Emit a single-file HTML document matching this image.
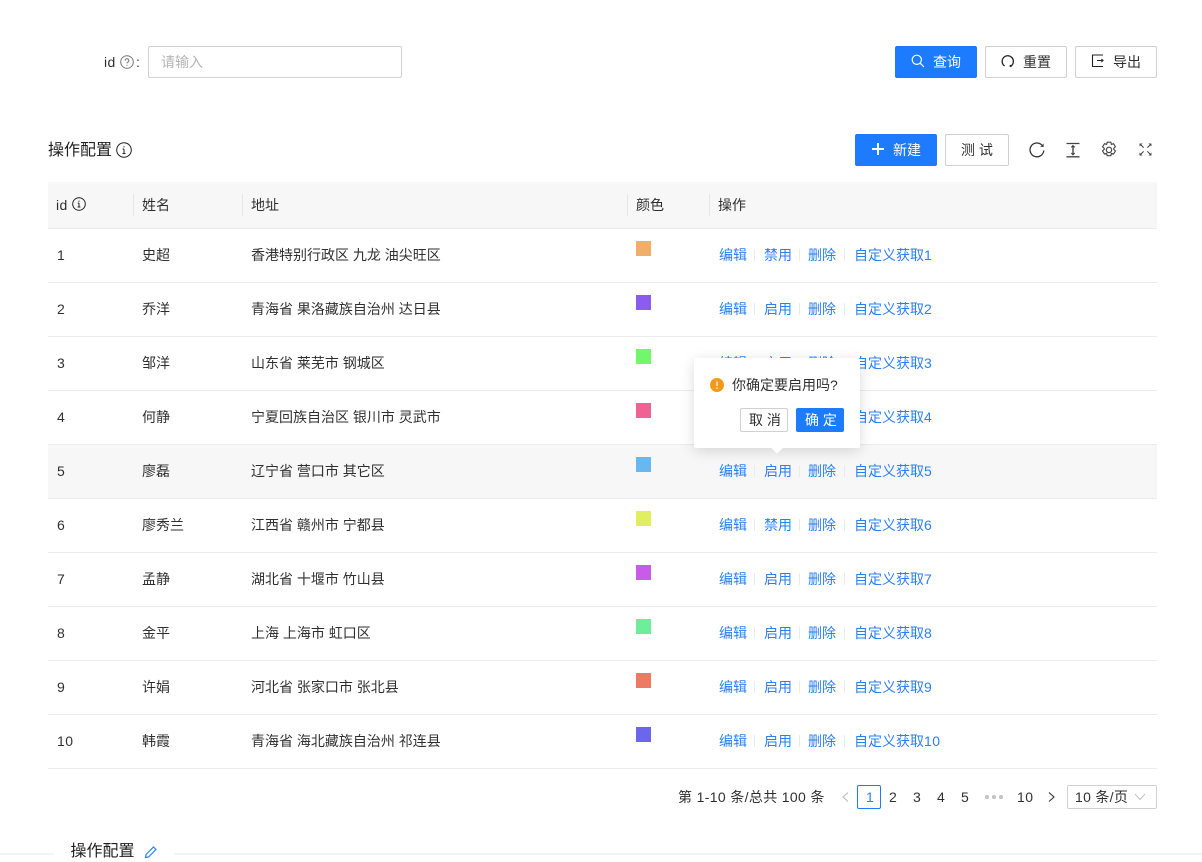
<!DOCTYPE html>
<html><head><meta charset="utf-8">
<style>
html,body{margin:0;padding:0;background:#fff}
body{width:1202px;height:857px;position:relative;overflow:hidden;font-family:"Liberation Sans","Noto Sans CJK SC",sans-serif;font-size:14px;color:rgba(0,0,0,.82)}
.a{position:absolute;white-space:nowrap;line-height:20px}
.box{position:absolute;box-sizing:border-box;border:1px solid #d0d0d0;border-radius:2px;background:#fff}
.pri{position:absolute;box-sizing:border-box;background:#1c7bff;border-radius:2px}
.line{position:absolute;left:48px;width:1109px;height:1px;background:#ececec}
.sw{position:absolute;left:636px;width:15px;height:15px}
.sep{position:absolute;width:1px;height:12px;background:#ebebeb}
.hs{position:absolute;width:1px;height:22px;top:194px;background:#e6e6e6}
.l{color:#2b7ff5}
svg{position:absolute;overflow:visible}
</style></head><body>

<div class="a" style="left:104px;top:52px;letter-spacing:.4px">id</div>
<svg style="left:120px;top:55px" width="14" height="14" viewBox="0 0 14 14" fill="none" stroke="#777"><circle cx="7" cy="7" r="6.3"/><path d="M5.2 5.6a1.8 1.8 0 1 1 2.7 1.5c-.6.4-.9.7-.9 1.3" /><path d="M7 9.8v1"/></svg>
<div class="a" style="left:136px;top:52px">:</div>
<div class="box" style="left:148px;top:46px;width:254px;height:32px"></div>
<div class="a" style="left:161px;top:52px;color:#b5b5b5">请输入</div>

<div class="pri" style="left:895px;top:46px;width:82px;height:32px"></div>
<svg style="left:911px;top:54px" width="14" height="14" viewBox="0 0 14 14" fill="none" stroke="#fff" stroke-width="1.2"><circle cx="5.8" cy="5.8" r="4.6"/><path d="M9.2 9.2l3.8 3.8"/></svg>
<div class="a" style="left:933px;top:52px;color:#fff">查询</div>
<div class="box" style="left:985px;top:46px;width:82px;height:32px"></div>
<svg style="left:1001px;top:54px" width="14" height="14" viewBox="0 0 14 14" fill="none" stroke="#222" stroke-width="1.3"><path d="M3.6 12A5.6 5.6 0 1 1 10.2 11.800"/><circle cx="9.600" cy="12" r="1.100" fill="#222" stroke="none"/></svg>
<div class="a" style="left:1023px;top:52px">重置</div>
<div class="box" style="left:1075px;top:46px;width:82px;height:32px"></div>
<svg style="left:1091px;top:54px" width="14" height="14" viewBox="0 0 14 14" fill="none" stroke="#222" stroke-width="1.1"><path d="M12 1H1.500v11.500H12"/><path d="M6 6.500h6M10.400 5l1.600 1.500-1.600 1.500"/></svg>
<div class="a" style="left:1113px;top:52px">导出</div>

<div class="a" style="left:48px;top:141px;font-size:16px;color:rgba(0,0,0,.88)">操作配置</div>
<svg style="left:116px;top:142px" width="16" height="16" viewBox="0 0 16 16" fill="none" stroke="#222" stroke-width="1"><circle cx="8" cy="8" r="7.300"/><path d="M8 7v4.500M6.600 7H8M6.500 11.500h3M8 4.200v1.200"/></svg>

<div class="pri" style="left:855px;top:134px;width:82px;height:32px"></div>
<svg style="left:872px;top:143px" width="12" height="12" viewBox="0 0 12 12" stroke="#fff" stroke-width="2"><path d="M6 0v12M0 6h12"/></svg>
<div class="a" style="left:893px;top:140px;color:#fff">新建</div>
<div class="box" style="left:945px;top:134px;width:64px;height:32px"></div>
<div class="a" style="left:961px;top:140px">测 试</div>

<svg style="left:1029px;top:142px" width="16" height="16" viewBox="0 0 16 16" fill="none" stroke="#333" stroke-width="1.300"><path d="M14.800 8.500A6.900 6.900 0 1 1 12.800 3"/><path d="M14.600 1.500v3.400h-3.400z" fill="#333" stroke="none"/></svg>
<svg style="left:1065px;top:142px" width="16" height="16" viewBox="0 0 16 16" fill="none" stroke="#444" stroke-width="1.300"><path d="M1.500 1.500h13M1.500 14.800h13"/><path d="M8 4v8.500" stroke-width="1.400"/><path d="M6.300 5.400L8 3.600l1.700 1.800M6.300 11L8 12.800l1.700-1.800" stroke-width="1.100"/></svg>
<svg style="left:1100px;top:141px" width="18" height="18" viewBox="0 0 16 16" fill="none" stroke="#444" stroke-width="1"><path d="M6.400 1h3.200l.5 2 1.900-.6 1.700 2.700-1.500 1.500a5 5 0 0 1 0 .8l1.500 1.500-1.700 2.700-1.900-.6-.5 2H6.400l-.5-2-1.900.6-1.700-2.700 1.500-1.500a5 5 0 0 1 0-.8L2.300 5.100 4 2.400l1.900.6z"/><circle cx="8" cy="7.900" r="2.400"/></svg>
<svg style="left:1139px;top:143px" width="13" height="13" viewBox="0 0 14 14" fill="none" stroke="#444" stroke-width="1.100"><path d="M2 2l3 3M12 2L9 5M2 12l3-3M12 12L9 9"/><path d="M.6.6h3.200L.6 3.800zM13.400.6h-3.200l3.200 3.200zM.6 13.400h3.200L.6 10.200zM13.400 13.400h-3.200l3.200-3.200z" fill="#444" stroke="none"/></svg>

<div style="position:absolute;left:48px;top:182px;width:1109px;height:46px;background:#f7f7f7"></div>
<div class="line" style="top:228px"></div>
<div style="position:absolute;left:48px;top:445px;width:1109px;height:53px;background:#f7f7f7"></div>
<div class="hs" style="left:133px"></div><div class="hs" style="left:242px"></div><div class="hs" style="left:627px"></div><div class="hs" style="left:709px"></div>
<div class="a" style="left:56px;top:195px;letter-spacing:.4px">id</div>
<svg style="left:72px;top:197px" width="14" height="14" viewBox="0 0 14 14" fill="none" stroke="#222" stroke-width="1"><circle cx="7" cy="7" r="6.300"/><path d="M7 6v4M5.800 6H7M5.600 10h2.800M7 3.600v1.100"/></svg>
<div class="a" style="left:142px;top:195px">姓名</div>
<div class="a" style="left:251px;top:195px">地址</div>
<div class="a" style="left:636px;top:195px">颜色</div>
<div class="a" style="left:718px;top:195px">操作</div>

<div class="line" style="top:282px"></div><div class="line" style="top:336px"></div><div class="line" style="top:390px"></div><div class="line" style="top:444px"></div><div class="line" style="top:498px"></div><div class="line" style="top:552px"></div><div class="line" style="top:606px"></div><div class="line" style="top:660px"></div><div class="line" style="top:714px"></div><div class="line" style="top:768px"></div>

<div class="a" style="left:57px;top:245px">1</div><div class="a" style="left:142px;top:245px">史超</div><div class="a" style="left:251px;top:245px">香港特别行政区 九龙 油尖旺区</div>
<div class="a" style="left:57px;top:299px">2</div><div class="a" style="left:142px;top:299px">乔洋</div><div class="a" style="left:251px;top:299px">青海省 果洛藏族自治州 达日县</div>
<div class="a" style="left:57px;top:353px">3</div><div class="a" style="left:142px;top:353px">邹洋</div><div class="a" style="left:251px;top:353px">山东省 莱芜市 钢城区</div>
<div class="a" style="left:57px;top:407px">4</div><div class="a" style="left:142px;top:407px">何静</div><div class="a" style="left:251px;top:407px">宁夏回族自治区 银川市 灵武市</div>
<div class="a" style="left:57px;top:461px">5</div><div class="a" style="left:142px;top:461px">廖磊</div><div class="a" style="left:251px;top:461px">辽宁省 营口市 其它区</div>
<div class="a" style="left:57px;top:515px">6</div><div class="a" style="left:142px;top:515px">廖秀兰</div><div class="a" style="left:251px;top:515px">江西省 赣州市 宁都县</div>
<div class="a" style="left:57px;top:569px">7</div><div class="a" style="left:142px;top:569px">孟静</div><div class="a" style="left:251px;top:569px">湖北省 十堰市 竹山县</div>
<div class="a" style="left:57px;top:623px">8</div><div class="a" style="left:142px;top:623px">金平</div><div class="a" style="left:251px;top:623px">上海 上海市 虹口区</div>
<div class="a" style="left:57px;top:677px">9</div><div class="a" style="left:142px;top:677px">许娟</div><div class="a" style="left:251px;top:677px">河北省 张家口市 张北县</div>
<div class="a" style="left:57px;top:731px;letter-spacing:.5px">10</div><div class="a" style="left:142px;top:731px">韩霞</div><div class="a" style="left:251px;top:731px">青海省 海北藏族自治州 祁连县</div>

<div class="sw" style="top:241px;background:#efaf6b"></div>
<div class="sw" style="top:295px;background:#8a5cf0"></div>
<div class="sw" style="top:349px;background:#73f76a"></div>
<div class="sw" style="top:403px;background:#f06292"></div>
<div class="sw" style="top:457px;background:#68b7ee"></div>
<div class="sw" style="top:511px;background:#e0ee60"></div>
<div class="sw" style="top:565px;background:#c85ce8"></div>
<div class="sw" style="top:619px;background:#6cee9a"></div>
<div class="sw" style="top:673px;background:#ee7a66"></div>
<div class="sw" style="top:727px;background:#6c66ee"></div>

<div class="a l" style="left:719px;top:245px">编辑</div><div class="sep" style="left:754px;top:249px"></div><div class="a l" style="left:764px;top:245px">禁用</div><div class="sep" style="left:799px;top:249px"></div><div class="a l" style="left:808px;top:245px">删除</div><div class="sep" style="left:844px;top:249px"></div><div class="a l" style="left:854px;top:245px">自定义获取1</div>
<div class="a l" style="left:719px;top:299px">编辑</div><div class="sep" style="left:754px;top:303px"></div><div class="a l" style="left:764px;top:299px">启用</div><div class="sep" style="left:799px;top:303px"></div><div class="a l" style="left:808px;top:299px">删除</div><div class="sep" style="left:844px;top:303px"></div><div class="a l" style="left:854px;top:299px">自定义获取2</div>
<div class="a l" style="left:719px;top:353px">编辑</div><div class="a l" style="left:764px;top:353px">启用</div><div class="a l" style="left:808px;top:353px">删除</div><div class="a l" style="left:854px;top:353px">自定义获取3</div>
<div class="a l" style="left:854px;top:407px">自定义获取4</div>
<div class="a l" style="left:719px;top:461px">编辑</div><div class="sep" style="left:754px;top:465px"></div><div class="a l" style="left:764px;top:461px">启用</div><div class="sep" style="left:799px;top:465px"></div><div class="a l" style="left:808px;top:461px">删除</div><div class="sep" style="left:844px;top:465px"></div><div class="a l" style="left:854px;top:461px">自定义获取5</div>
<div class="a l" style="left:719px;top:515px">编辑</div><div class="sep" style="left:754px;top:519px"></div><div class="a l" style="left:764px;top:515px">禁用</div><div class="sep" style="left:799px;top:519px"></div><div class="a l" style="left:808px;top:515px">删除</div><div class="sep" style="left:844px;top:519px"></div><div class="a l" style="left:854px;top:515px">自定义获取6</div>
<div class="a l" style="left:719px;top:569px">编辑</div><div class="sep" style="left:754px;top:573px"></div><div class="a l" style="left:764px;top:569px">启用</div><div class="sep" style="left:799px;top:573px"></div><div class="a l" style="left:808px;top:569px">删除</div><div class="sep" style="left:844px;top:573px"></div><div class="a l" style="left:854px;top:569px">自定义获取7</div>
<div class="a l" style="left:719px;top:623px">编辑</div><div class="sep" style="left:754px;top:627px"></div><div class="a l" style="left:764px;top:623px">启用</div><div class="sep" style="left:799px;top:627px"></div><div class="a l" style="left:808px;top:623px">删除</div><div class="sep" style="left:844px;top:627px"></div><div class="a l" style="left:854px;top:623px">自定义获取8</div>
<div class="a l" style="left:719px;top:677px">编辑</div><div class="sep" style="left:754px;top:681px"></div><div class="a l" style="left:764px;top:677px">启用</div><div class="sep" style="left:799px;top:681px"></div><div class="a l" style="left:808px;top:677px">删除</div><div class="sep" style="left:844px;top:681px"></div><div class="a l" style="left:854px;top:677px">自定义获取9</div>
<div class="a l" style="left:719px;top:731px">编辑</div><div class="sep" style="left:754px;top:735px"></div><div class="a l" style="left:764px;top:731px">启用</div><div class="sep" style="left:799px;top:735px"></div><div class="a l" style="left:808px;top:731px">删除</div><div class="sep" style="left:844px;top:735px"></div><div class="a l" style="left:854px;top:731px">自定义获取<span style="letter-spacing:.5px">10</span></div>

<div style="position:absolute;left:694px;top:358px;width:166px;height:90px;background:#fff;border-radius:2px;box-shadow:0 3px 14px rgba(0,0,0,.14)"></div>
<div style="position:absolute;left:773px;top:444px;width:8px;height:8px;background:#fff;transform:rotate(45deg)"></div>
<svg style="left:710px;top:378px" width="14" height="14" viewBox="0 0 14 14"><circle cx="7" cy="7" r="7" fill="#f59a16"/><path d="M7 3.500v4.500M7 9.500v1.200" stroke="#fff" stroke-width="1.200"/></svg>
<div class="a" style="left:732px;top:375px">你确定要启用吗?</div>
<div class="box" style="left:740px;top:408px;width:48px;height:24px"></div>
<div class="a" style="left:749px;top:410px">取 消</div>
<div class="pri" style="left:796px;top:408px;width:48px;height:24px"></div>
<div class="a" style="left:805px;top:410px;color:#fff">确 定</div>

<div class="a" style="left:678px;top:787px;letter-spacing:.35px">第 1-10 条/总共 100 条</div>
<svg style="left:840px;top:791px" width="10" height="12" viewBox="0 0 10 12" fill="none" stroke="#bbb" stroke-width="1.100"><path d="M8 1.500L3 6l5 4.500"/></svg>
<div class="box" style="left:857px;top:785px;width:24px;height:24px;border-color:#1c7bff"></div>
<div class="a" style="left:866px;top:787px;color:#2b7ff5">1</div>
<div class="a" style="left:889px;top:787px">2</div>
<div class="a" style="left:913px;top:787px">3</div>
<div class="a" style="left:937px;top:787px">4</div>
<div class="a" style="left:961px;top:787px">5</div>
<div style="position:absolute;left:985px;top:795px;width:3.500px;height:3.500px;border-radius:50%;background:#c4c4c4"></div>
<div style="position:absolute;left:992px;top:795px;width:3.500px;height:3.500px;border-radius:50%;background:#c4c4c4"></div>
<div style="position:absolute;left:999px;top:795px;width:3.500px;height:3.500px;border-radius:50%;background:#c4c4c4"></div>
<div class="a" style="left:1017px;top:787px;letter-spacing:.5px">10</div>
<svg style="left:1047px;top:791px" width="10" height="12" viewBox="0 0 10 12" fill="none" stroke="#333" stroke-width="1.100"><path d="M2 1.500L7 6l-5 4.500"/></svg>
<div class="box" style="left:1067px;top:785px;width:90px;height:24px"></div>
<div class="a" style="left:1075px;top:787px;letter-spacing:.3px">10 条/页</div>
<svg style="left:1134px;top:793px" width="12" height="8" viewBox="0 0 12 8" fill="none" stroke="#c4c4c4" stroke-width="1.100"><path d="M1 1l5 5.500L11 1"/></svg>

<div style="position:absolute;left:0;top:853px;width:54px;height:2px;background:#f3f3f3"></div>
<div style="position:absolute;left:174px;top:853px;width:1028px;height:2px;background:#f3f3f3"></div>
<div class="a" style="left:70.500px;top:842px;font-size:16px;color:rgba(0,0,0,.88)">操作配置</div>
<svg style="left:144px;top:845px" width="14" height="14" viewBox="0 0 14 14" fill="none" stroke="#2b7ff5" stroke-width="1.200"><path d="M1.500 12.500l.6-3L9.500 2l2.500 2.500L4.500 12z"/></svg>

</body></html>
